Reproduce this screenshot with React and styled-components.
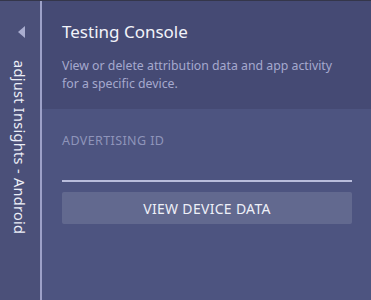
import React from 'react';
import styled, { createGlobalStyle } from 'styled-components';

const GlobalStyle = createGlobalStyle`
  html, body {
    margin: 0;
    padding: 0;
    background: #4d5480;
  }
  body {
    font-family: "Noto Sans", "DejaVu Sans", sans-serif;
  }
`;

const Frame = styled.div`
  display: flex;
  height: 300px;
  width: 371px;
  box-sizing: border-box;
  border-top: 1px solid #34364a;
  overflow: hidden;
`;

const Sidebar = styled.aside`
  width: 40px;
  flex-shrink: 0;
  background: #4b5079;
  border-right: 2px solid #9da1c8;
  display: flex;
  flex-direction: column;
  align-items: center;
  padding-top: 25px;
  gap: 22px;
`;

const Arrow = styled.div`
  width: 0;
  height: 0;
  border-top: 6px solid transparent;
  border-bottom: 6px solid transparent;
  border-right: 7px solid #a9adcf;
  margin-left: 3px;
`;

const SideLabel = styled.div`
  writing-mode: vertical-rl;
  color: #eceef7;
  font-size: 14.5px;
  white-space: nowrap;
  letter-spacing: 0.3px;
`;

const Main = styled.main`
  flex: 1;
  display: flex;
  flex-direction: column;
  background: #4d5480;
`;

const Header = styled.header`
  height: 108px;
  box-sizing: border-box;
  background: #454a74;
  padding: 19px 20px 0;
`;

const Title = styled.h1`
  margin: 0;
  font-size: 17px;
  font-weight: 400;
  color: #f2f3f9;
  line-height: 24px;
`;

const Description = styled.p`
  margin: 13px 0 0;
  font-size: 12.3px;
  line-height: 18px;
  color: #a5a9ce;
  padding-right: 12px;
`;

const Body = styled.section`
  padding: 24px 19px 0 20px;
  display: flex;
  flex-direction: column;
`;

const FieldLabel = styled.label`
  font-size: 12.5px;
  color: #8f94ba;
  text-transform: uppercase;
  letter-spacing: 0.4px;
  line-height: 16px;
`;

const Input = styled.input`
  margin-top: 11px;
  height: 20px;
  background: transparent;
  border: none;
  border-bottom: 2px solid #b9bddc;
  outline: none;
  padding: 0;
  color: #fff;
  font-family: inherit;
`;

const Button = styled.button`
  margin-top: 10px;
  height: 32px;
  border: none;
  border-radius: 2px;
  background: #62698f;
  color: #eef0f8;
  font-family: inherit;
  font-size: 14px;
  text-transform: uppercase;
  letter-spacing: 0.3px;
  cursor: pointer;
`;

export default function App() {
  return (
    <>
      <GlobalStyle />
      <Frame>
        <Sidebar>
          <Arrow />
          <SideLabel>adjust Insights - Android</SideLabel>
        </Sidebar>
        <Main>
          <Header>
            <Title>Testing Console</Title>
            <Description>
              View or delete attribution data and app activity for a specific device.
            </Description>
          </Header>
          <Body>
            <FieldLabel>Advertising ID</FieldLabel>
            <Input type="text" />
            <Button>View Device Data</Button>
          </Body>
        </Main>
      </Frame>
    </>
  );
}
